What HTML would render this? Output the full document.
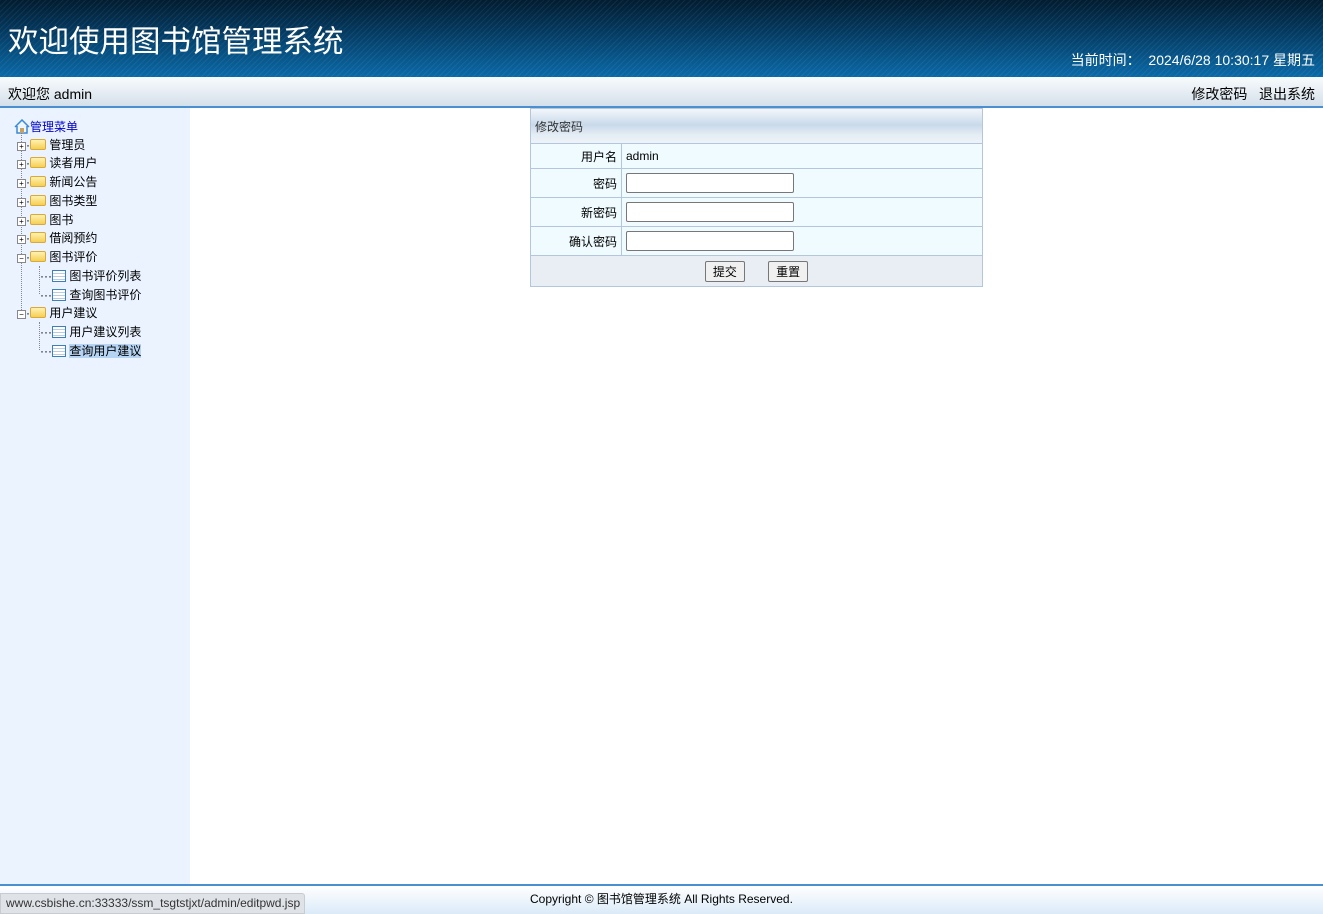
<!DOCTYPE html>
<html><head><meta charset="utf-8">
<style>
*{margin:0;padding:0;box-sizing:border-box}
body{width:1323px;height:914px;overflow:hidden;font-family:"Liberation Sans","Noto Sans CJK SC",sans-serif;background:#fff;position:relative;font-size:12px;color:#000}
#hd{position:absolute;left:0;top:0;width:1323px;height:77px;background:repeating-linear-gradient(135deg,rgba(255,255,255,0.06) 0 1px,transparent 1px 4px),linear-gradient(#021c30,#04395f 40%,#0a6aa8);}
#hd h1{position:absolute;left:8px;top:17px;font-size:30.5px;font-weight:normal;color:#fff;letter-spacing:0}
#hd .t{position:absolute;right:8px;top:50px;color:#fff;font-size:14px}
#bar{position:absolute;top:77px;left:0;width:1323px;height:31px;background:linear-gradient(#f8fbfd,#d5e0ea);border-bottom:2px solid #4a8fd0}
#bar .l{position:absolute;left:8px;top:7px;font-size:14px}
#bar .r{position:absolute;right:8px;top:7px;font-size:14px}
#sd{position:absolute;left:0;top:108px;width:190px;height:776px;background:#eaf3ff}
.n{position:absolute;font-size:12px;white-space:nowrap}
.fold{display:inline-block;width:16px;height:11px;background:linear-gradient(#fff2b0,#f6cf55);border:1px solid #d9a93a;border-radius:2px;vertical-align:-1px}
.pg{display:inline-block;width:14px;height:12px;border:1px solid #3d7fb8;background:repeating-linear-gradient(#fff 0 2px,#bcd 2px 3px);vertical-align:-2px}
.pm{display:inline-block;width:9px;height:9px;border:1px solid #888;background:#fff;font-size:8px;line-height:7px;text-align:center;vertical-align:0}
#ft{position:absolute;top:884px;left:0;width:1323px;height:30px;border-top:2px solid #4a8fd0;background:linear-gradient(#ffffff,#dbeaf8)}
#ft .c{position:absolute;left:530px;top:4px;font-size:12px}
#st{position:absolute;left:0;top:893px;width:305px;height:21px;background:#dfe3e8;border:1px solid #c8ccd0;border-radius:0 3px 0 0;font-size:12px;color:#333;padding:2px 5px}
table{position:absolute;left:530px;top:108px;width:453px;border-collapse:collapse;font-size:12px}
td{border:1px solid #b4c6dc;background:#f0fbff}
td.lb{width:91px;text-align:right;padding-right:4px}
input{width:168px;height:20px;border:1px solid #777;border-radius:2px;margin-left:4px;display:block}
button{font:12px "Liberation Sans","Noto Sans CJK SC",sans-serif;height:21px;width:40px;border:1px solid #777;border-radius:2px;background:#f0f0f0}
</style></head><body>
<div id="hd"><h1>欢迎使用图书馆管理系统</h1><div class="t">当前时间：&nbsp; 2024/6/28 10:30:17 星期五</div></div>
<div id="bar"><div class="l">欢迎您 admin</div><div class="r">修改密码&nbsp;&nbsp; 退出系统</div></div>
<div id="sd">
<div style="position:absolute;left:21px;top:24px;height:180px;border-left:1px dotted #888"></div>
<div style="position:absolute;left:39px;top:158px;height:28px;border-left:1px dotted #888"></div>
<div style="position:absolute;left:39px;top:214px;height:28px;border-left:1px dotted #888"></div>
<svg style="position:absolute;left:14px;top:11px" width="16" height="15" viewBox="0 0 16 15"><path d="M1 8 L8 1 L15 8 M3 7 V14 H13 V7" fill="#eef6ff" stroke="#3b8ad6" stroke-width="1.5"/><rect x="6" y="9" width="4" height="5" fill="#c8a060"/></svg>
<div class="n" style="left:30px;top:10px;color:#0000cc">管理菜单</div>
<div class="n" style="left:17px;top:28px"><span class="pm">+</span>·<span class="fold"></span> 管理员</div>
<div class="n" style="left:17px;top:46px"><span class="pm">+</span>·<span class="fold"></span> 读者用户</div>
<div class="n" style="left:17px;top:65px"><span class="pm">+</span>·<span class="fold"></span> 新闻公告</div>
<div class="n" style="left:17px;top:84px"><span class="pm">+</span>·<span class="fold"></span> 图书类型</div>
<div class="n" style="left:17px;top:103px"><span class="pm">+</span>·<span class="fold"></span> 图书</div>
<div class="n" style="left:17px;top:121px"><span class="pm">+</span>·<span class="fold"></span> 借阅预约</div>
<div class="n" style="left:17px;top:140px"><span class="pm">−</span>·<span class="fold"></span> 图书评价</div>
<div class="n" style="left:40px;top:159px">···<span class="pg"></span> 图书评价列表</div>
<div class="n" style="left:40px;top:178px">···<span class="pg"></span> 查询图书评价</div>
<div class="n" style="left:17px;top:196px"><span class="pm">−</span>·<span class="fold"></span> 用户建议</div>
<div class="n" style="left:40px;top:215px">···<span class="pg"></span> 用户建议列表</div>
<div class="n" style="left:40px;top:234px">···<span class="pg"></span> <span style="background:#b5d3f3">查询用户建议</span></div>
</div>
<table>
<tr><td colspan="2" style="height:35px;background:linear-gradient(#f2f6fa 0,#c9d9ea 45%,#e5edf5 75%,#eef3f8);color:#333;padding:0 4px;font-size:12px">修改密码</td></tr>
<tr><td class="lb" style="height:25px">用户名</td><td style="padding-left:4px">admin</td></tr>
<tr><td class="lb" style="height:29px">密码</td><td><input></td></tr>
<tr><td class="lb" style="height:29px">新密码</td><td><input></td></tr>
<tr><td class="lb" style="height:29px">确认密码</td><td><input></td></tr>
<tr><td colspan="2" style="height:31px;background:#e9eef4;text-align:center"><button>提交</button>&nbsp;&nbsp;&nbsp;&nbsp;&nbsp;&nbsp; <button>重置</button></td></tr>
</table>
<div id="ft"><div class="c">Copyright © 图书馆管理系统 All Rights Reserved.</div></div>
<div id="st">www.csbishe.cn:33333/ssm_tsgtstjxt/admin/editpwd.jsp</div>
</body></html>
